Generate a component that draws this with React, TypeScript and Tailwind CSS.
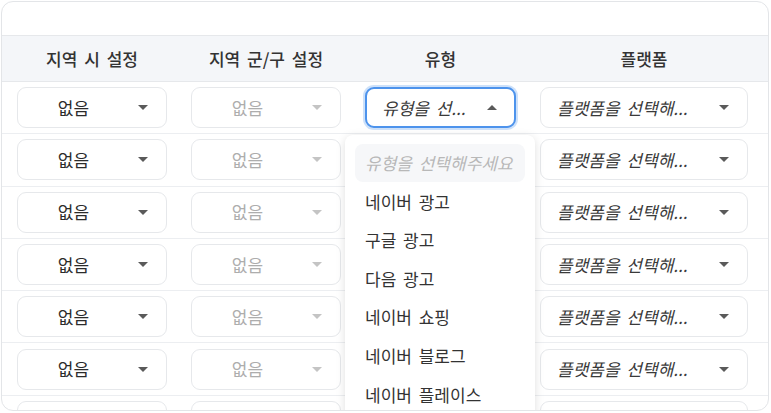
import React from "react";

const font = { fontFamily: '"Noto Sans CJK KR", "Noto Sans", sans-serif' };

function Caret({ up = false, light = false }: { up?: boolean; light?: boolean }) {
  const color = light ? "#c4c4c4" : "#5a5a5a";
  return (
    <span
      className="inline-block w-0 h-0 border-l-[5px] border-r-[5px] border-l-transparent border-r-transparent"
      style={
        up
          ? { borderBottom: `5px solid ${color}` }
          : { borderTop: `5px solid ${color}` }
      }
    />
  );
}

function CenterSelect({ light = false, empty = false }: { light?: boolean; empty?: boolean }) {
  return (
    <div className="h-[41px] w-full flex items-center rounded-[9px] border border-[#e6e8eb] bg-white">
      <span className={`flex-1 text-center text-[17px] ${light ? "text-[#adadad]" : "text-[#2b2b2b]"}`}>
        {empty ? "" : "없음"}
      </span>
      <span className="ml-[9px] mr-[18px] flex items-center">
        <Caret light={light} />
      </span>
    </div>
  );
}

function PlaceholderSelect({ text, open = false }: { text: string; open?: boolean }) {
  return (
    <div
      className={`h-[41px] w-full flex items-center rounded-[9px] bg-white ${
        open
          ? "border-2 border-[#4d93ec] shadow-[0_0_0_2px_rgba(77,147,236,0.28)] pl-[15px]"
          : "border border-[#e6e8eb] pl-[16px]"
      }`}
    >
      <span className="flex-1 italic text-[17px] [word-spacing:3px] text-[#3a3a3a] whitespace-nowrap overflow-hidden">
        {text}
      </span>
      <span className={`flex items-center ${open ? "mr-[17px]" : "mr-[18px]"}`}>
        <Caret up={open} />
      </span>
    </div>
  );
}

const rows = [0, 1, 2, 3, 4, 5, 6];
const items = ["네이버 광고", "구글 광고", "다음 광고", "네이버 쇼핑", "네이버 블로그", "네이버 플레이스"];

export default function App() {
  return (
    <div className="w-[771px] h-[413px] bg-white pt-[1px] pl-[1px]" style={font}>
      <div className="relative w-[768px] h-[410px] border border-[#e3e5e8] rounded-[12px] overflow-hidden bg-white">
        <div className="h-[33px]" />
        <div className="h-[47px] border-y border-[#e6e8eb] bg-[#f4f6f9] grid grid-cols-[150px_150px_151px_208px] gap-x-[24px] pl-[15px] items-center">
          <div className="text-center text-[17px] [word-spacing:3px] font-medium text-[#333]">지역 시 설정</div>
          <div className="text-center text-[17px] [word-spacing:3px] font-medium text-[#333]">지역 군/구 설정</div>
          <div className="text-center text-[17px] [word-spacing:3px] font-medium text-[#333]">유형</div>
          <div className="text-center text-[17px] [word-spacing:3px] font-medium text-[#333]">플랫폼</div>
        </div>
        {rows.map((r) => (
          <div
            key={r}
            className="h-[52.3px] border-b border-[#eceef1] grid grid-cols-[150px_150px_151px_208px] gap-x-[24px] pl-[15px] items-center"
          >
            <CenterSelect empty={r === 6} />
            <CenterSelect light empty={r === 6} />
            {r === 0 ? <PlaceholderSelect text="유형을 선..." open /> : <div />}
            <PlaceholderSelect text={r === 6 ? "" : "플랫폼을 선택해..."} />
          </div>
        ))}
        <div className="absolute left-[343px] top-[133px] w-[190px] h-[300px] bg-white rounded-[8px] shadow-[0_2px_10px_rgba(0,0,0,0.13)] pt-[9px] px-[10px]">
          <div className="h-[38px] rounded-[8px] bg-[#f6f7f9] flex items-center pl-[10px] text-[17px] [word-spacing:3px] italic text-[#b8b8b8] whitespace-nowrap overflow-hidden">
            유형을 선택해주세요
          </div>
          {items.map((it) => (
            <div
              key={it}
              className="h-[38.6px] flex items-center pl-[10px] text-[17px] [word-spacing:3px] text-[#333] whitespace-nowrap"
            >
              {it}
            </div>
          ))}
        </div>
      </div>
    </div>
  );
}
